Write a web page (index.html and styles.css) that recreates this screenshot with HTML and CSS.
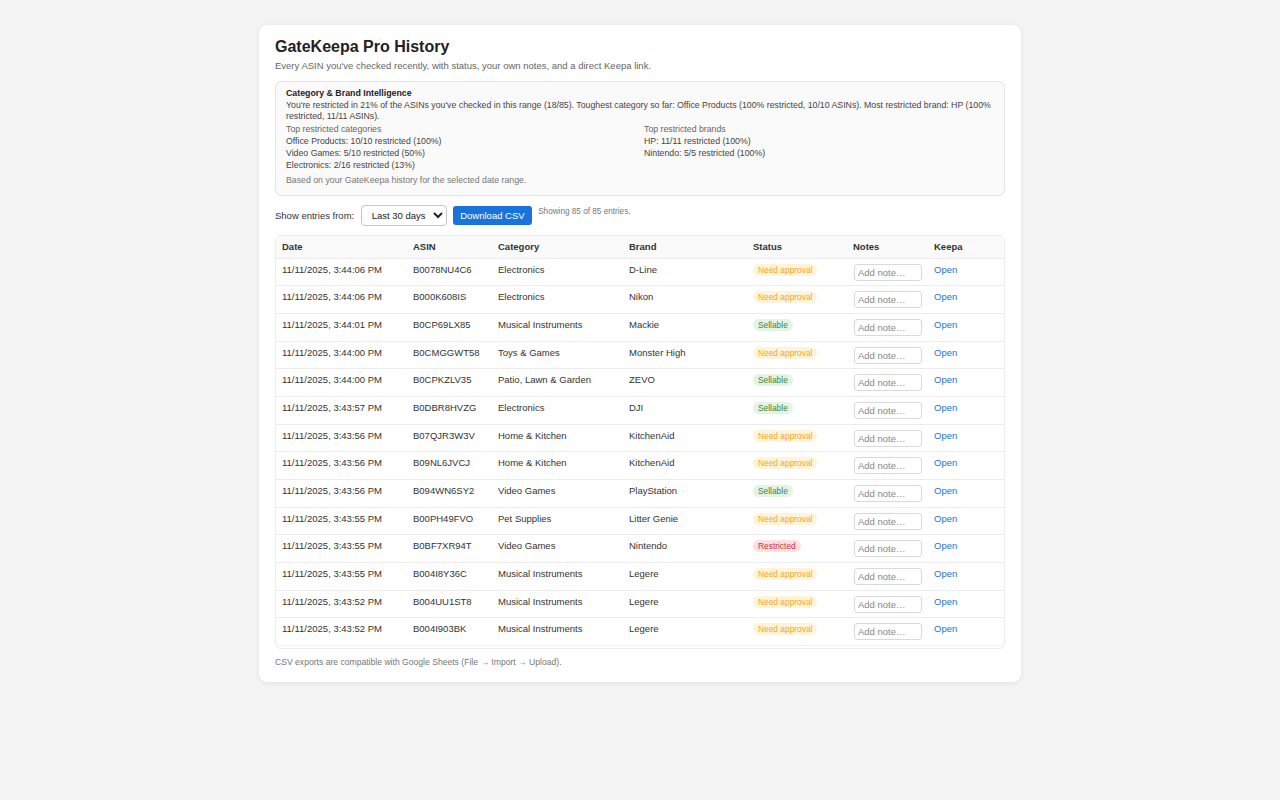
FILE: index.html
```html
<!DOCTYPE html>
<html lang="en">
<head>
<meta charset="utf-8">
<title>GateKeepa Pro History</title>
<link rel="stylesheet" href="styles.css">
</head>
<body>
<main class="card">
  <h1 class="title">GateKeepa Pro History</h1>
  <p class="subtitle">Every ASIN you've checked recently, with status, your own notes, and a direct Keepa link.</p>

  <section class="intel">
    <div class="intel-head">Category &amp; Brand Intelligence</div>
    <p class="intel-summary">You're restricted in 21% of the ASINs you've checked in this range (18/85). Toughest category so far: Office Products (100% restricted, 10/10 ASINs). Most restricted brand: HP (100% restricted, 11/11 ASINs).</p>
    <div class="intel-grid">
      <div class="intel-col">
        <div class="intel-label">Top restricted categories</div>
        <div>Office Products: 10/10 restricted (100%)</div>
        <div>Video Games: 5/10 restricted (50%)</div>
        <div>Electronics: 2/16 restricted (13%)</div>
      </div>
      <div class="intel-col">
        <div class="intel-label">Top restricted brands</div>
        <div>HP: 11/11 restricted (100%)</div>
        <div>Nintendo: 5/5 restricted (100%)</div>
      </div>
    </div>
    <p class="intel-note">Based on your GateKeepa history for the selected date range.</p>
  </section>

  <div class="controls">
    <label class="controls-label" for="range">Show entries from:</label>
    <select id="range" class="range">
      <option>Last 7 days</option>
      <option selected>Last 30 days</option>
      <option>Last 90 days</option>
      <option>All time</option>
    </select>
    <button class="btn" type="button">Download CSV</button>
    <span class="count">Showing 85 of 85 entries.</span>
  </div>

  <div class="table-wrap">
    <table class="history">
      <colgroup>
        <col class="c-date"><col class="c-asin"><col class="c-cat"><col class="c-brand"><col class="c-status"><col class="c-notes"><col class="c-keepa">
      </colgroup>
      <thead>
        <tr><th>Date</th><th>ASIN</th><th>Category</th><th>Brand</th><th>Status</th><th>Notes</th><th>Keepa</th></tr>
      </thead>
      <tbody>
        <tr><td>11/11/2025, 3:44:06 PM</td><td>B0078NU4C6</td><td>Electronics</td><td>D-Line</td><td><span class="badge approval">Need approval</span></td><td><input class="note" placeholder="Add note…"></td><td><a href="#">Open</a></td></tr>
        <tr><td>11/11/2025, 3:44:06 PM</td><td>B000K608IS</td><td>Electronics</td><td>Nikon</td><td><span class="badge approval">Need approval</span></td><td><input class="note" placeholder="Add note…"></td><td><a href="#">Open</a></td></tr>
        <tr><td>11/11/2025, 3:44:01 PM</td><td>B0CP69LX85</td><td>Musical Instruments</td><td>Mackie</td><td><span class="badge sellable">Sellable</span></td><td><input class="note" placeholder="Add note…"></td><td><a href="#">Open</a></td></tr>
        <tr><td>11/11/2025, 3:44:00 PM</td><td>B0CMGGWT58</td><td>Toys &amp; Games</td><td>Monster High</td><td><span class="badge approval">Need approval</span></td><td><input class="note" placeholder="Add note…"></td><td><a href="#">Open</a></td></tr>
        <tr><td>11/11/2025, 3:44:00 PM</td><td>B0CPKZLV35</td><td>Patio, Lawn &amp; Garden</td><td>ZEVO</td><td><span class="badge sellable">Sellable</span></td><td><input class="note" placeholder="Add note…"></td><td><a href="#">Open</a></td></tr>
        <tr><td>11/11/2025, 3:43:57 PM</td><td>B0DBR8HVZG</td><td>Electronics</td><td>DJI</td><td><span class="badge sellable">Sellable</span></td><td><input class="note" placeholder="Add note…"></td><td><a href="#">Open</a></td></tr>
        <tr><td>11/11/2025, 3:43:56 PM</td><td>B07QJR3W3V</td><td>Home &amp; Kitchen</td><td>KitchenAid</td><td><span class="badge approval">Need approval</span></td><td><input class="note" placeholder="Add note…"></td><td><a href="#">Open</a></td></tr>
        <tr><td>11/11/2025, 3:43:56 PM</td><td>B09NL6JVCJ</td><td>Home &amp; Kitchen</td><td>KitchenAid</td><td><span class="badge approval">Need approval</span></td><td><input class="note" placeholder="Add note…"></td><td><a href="#">Open</a></td></tr>
        <tr><td>11/11/2025, 3:43:56 PM</td><td>B094WN6SY2</td><td>Video Games</td><td>PlayStation</td><td><span class="badge sellable">Sellable</span></td><td><input class="note" placeholder="Add note…"></td><td><a href="#">Open</a></td></tr>
        <tr><td>11/11/2025, 3:43:55 PM</td><td>B00PH49FVO</td><td>Pet Supplies</td><td>Litter Genie</td><td><span class="badge approval">Need approval</span></td><td><input class="note" placeholder="Add note…"></td><td><a href="#">Open</a></td></tr>
        <tr><td>11/11/2025, 3:43:55 PM</td><td>B0BF7XR94T</td><td>Video Games</td><td>Nintendo</td><td><span class="badge restricted">Restricted</span></td><td><input class="note" placeholder="Add note…"></td><td><a href="#">Open</a></td></tr>
        <tr><td>11/11/2025, 3:43:55 PM</td><td>B004I8Y36C</td><td>Musical Instruments</td><td>Legere</td><td><span class="badge approval">Need approval</span></td><td><input class="note" placeholder="Add note…"></td><td><a href="#">Open</a></td></tr>
        <tr><td>11/11/2025, 3:43:52 PM</td><td>B004UU1ST8</td><td>Musical Instruments</td><td>Legere</td><td><span class="badge approval">Need approval</span></td><td><input class="note" placeholder="Add note…"></td><td><a href="#">Open</a></td></tr>
        <tr><td>11/11/2025, 3:43:52 PM</td><td>B004I903BK</td><td>Musical Instruments</td><td>Legere</td><td><span class="badge approval">Need approval</span></td><td><input class="note" placeholder="Add note…"></td><td><a href="#">Open</a></td></tr>
      </tbody>
    </table>
  </div>

  <p class="footnote">CSV exports are compatible with Google Sheets (File → Import → Upload).</p>
</main>
</body>
</html>
```

FILE: styles.css
```css
* {
  box-sizing: border-box;
}

html, body {
  margin: 0;
  padding: 0;
}

body {
  background: #f3f3f3;
  font-family: "Liberation Sans", Arial, sans-serif;
  font-size: 9.5px;
  color: #333;
  padding: 25px 0 40px;
}

.card {
  width: 762px;
  margin: 0 auto;
  background: #fff;
  border-radius: 8px;
  box-shadow: 0 1px 5px rgba(0, 0, 0, 0.08);
  padding: 12px 16px 15px;
}

.title {
  margin: 0;
  font-size: 16px;
  line-height: 19px;
  font-weight: 700;
  color: #222;
}

.subtitle {
  margin: 4px 0 9px;
  font-size: 9.5px;
  line-height: 12px;
  color: #666;
}

/* Category & brand summary box */
.intel {
  background: #fafafa;
  border: 1px solid #e4e4e4;
  border-radius: 6px;
  padding: 6px 10px 9px;
  line-height: 11px;
  font-size: 8.75px;
  color: #444;
}

.intel-head {
  font-weight: 700;
  color: #222;
  font-size: 8.8px;
  margin-bottom: 1px;
}

.intel-summary {
  margin: 0 0 1px;
}

.intel-grid {
  display: grid;
  grid-template-columns: 1fr 1fr;
  column-gap: 8px;
  line-height: 12px;
}

.intel-label {
  color: #666;
}

.intel-note {
  margin: 4px 0 0;
  color: #777;
}

/* Range filter + export */
.controls {
  display: flex;
  align-items: center;
  gap: 6.5px;
  margin: 9px 0 9px;
}

.controls-label {
  font-size: 9.5px;
  color: #333;
}

.range {
  width: 86px;
  height: 21px;
  font-family: inherit;
  font-size: 9.5px;
  color: #222;
  background: #fff;
  border: 1px solid #c8c8c8;
  border-radius: 4px;
  padding: 0 0 0 6px;
}

.btn {
  height: 19px;
  padding: 0 7px;
  background: #1a73d9;
  color: #fff;
  border: 0;
  border-radius: 3px;
  font-family: inherit;
  font-size: 9.5px;
}

.count {
  align-self: flex-start;
  margin-top: 2px;
  font-size: 8.2px;
  color: #777;
}

/* History table */
.table-wrap {
  border: 1px solid #ececec;
  border-radius: 6px;
  max-height: 414px;
  overflow-y: auto;
  scrollbar-width: none;
  padding-bottom: 3px;
}

.history {
  width: 100%;
  border-collapse: collapse;
  table-layout: fixed;
}

.c-date { width: 131px; }
.c-asin { width: 85px; }
.c-cat { width: 131px; }
.c-brand { width: 124px; }
.c-status { width: 100px; }
.c-notes { width: 81px; }
.c-keepa { width: auto; }

.history th {
  background: #fafafa;
  text-align: left;
  font-weight: 700;
  color: #333;
  font-size: 9.5px;
  height: 22px;
  padding: 0 6px;
  border-bottom: 1px solid #ececec;
}

.history td {
  vertical-align: top;
  font-size: 9.5px;
  line-height: 11px;
  padding: 5px 6px 4.7px;
  border-bottom: 1px solid #ececec;
  white-space: nowrap;
  color: #333;
}

.history tbody tr:last-child td {
  border-bottom-color: #f2f2f2;
}

.badge {
  display: inline-block;
  padding: 1px 5px;
  border-radius: 7px;
  font-size: 8.4px;
  line-height: 10px;
}

.badge.approval {
  background: #fff4d9;
  color: #f4a62a;
}

.badge.sellable {
  background: #e5f3e7;
  color: #37873d;
}

.badge.restricted {
  background: #fde0e3;
  color: #d32f3a;
}

.note {
  display: block;
  width: 68px;
  height: 17px;
  margin: 0 0 0 1px;
  padding: 0 3px;
  border: 1px solid #d9d9d9;
  border-radius: 3px;
  font-family: inherit;
  font-size: 9.5px;
  color: #333;
}

.note::placeholder {
  color: #888;
}

.history a {
  color: #1a73d9;
  text-decoration: none;
}

.footnote {
  margin: 8px 0 0;
  font-size: 8.6px;
  color: #777;
}
```
